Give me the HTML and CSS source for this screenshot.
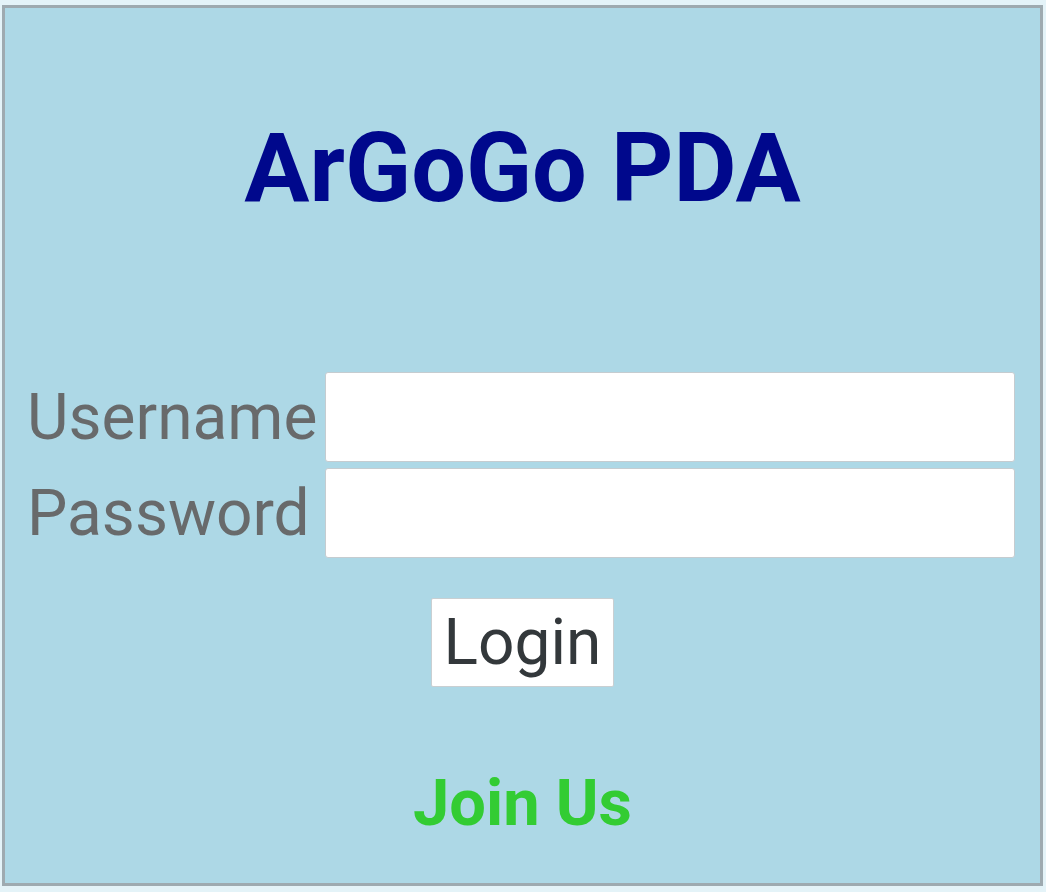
FILE: index.html
```html
<!DOCTYPE html>
<html lang="en">
<head>
<meta charset="utf-8">
<title>ArGoGo PDA</title>
<link rel="stylesheet" href="styles.css">
</head>
<body>
<div class="box">
  <h1 class="title">ArGoGo PDA</h1>
  <form class="form">
    <div class="grid">
      <label class="label" for="u">Username</label>
      <input class="field" id="u" type="text">
      <label class="label" for="p">Password</label>
      <input class="field" id="p" type="password">
    </div>
    <div class="actions">
      <button class="btn" type="button">Login</button>
    </div>
  </form>
  <div class="join"><a class="join-link" href="#">Join Us</a></div>
</div>
</body>
</html>
```

FILE: styles.css
```css
html, body {
  margin: 0;
  padding: 0;
}
body {
  background: #e4f3f8;
  font-family: Roboto, "Noto Sans", sans-serif;
  padding: 5px 3px 0 2px;
}
.box {
  border: 3px solid #9eaab0;
  background: #add8e6;
  padding: 102px 0 42px;
}
.title {
  margin: 0;
  text-align: center;
  font-size: 97px;
  line-height: 116px;
  font-weight: 700;
  color: #00088c;
}
.form {
  margin: 146px 0 0;
}
.grid {
  display: grid;
  grid-template-columns: auto 1fr;
  column-gap: 8px;
  row-gap: 6px;
  padding: 0 25px 0 22px;
  align-items: center;
}
.label {
  font-size: 64px;
  line-height: 75px;
  color: #686a6b;
}
.field {
  height: 90px;
  box-sizing: border-box;
  margin: 0;
  border: 1px solid #c5ccd0;
  border-radius: 3px;
  background: #fff;
  font-size: 40px;
  padding: 0 10px;
  width: 100%;
}
.actions {
  display: flex;
  justify-content: center;
  margin-top: 40px;
}
.btn {
  font-family: Roboto, "Noto Sans", sans-serif;
  font-size: 64px;
  line-height: 75px;
  color: #33383b;
  background: #fff;
  border: 1px solid #c9cfd2;
  border-radius: 2px;
  padding: 6px 12px;
  margin: 0;
}
.join {
  text-align: center;
  margin-top: 78px;
}
.join-link {
  font-size: 65px;
  line-height: 76px;
  font-weight: 700;
  color: #33cc33;
  text-decoration: none;
}
```
